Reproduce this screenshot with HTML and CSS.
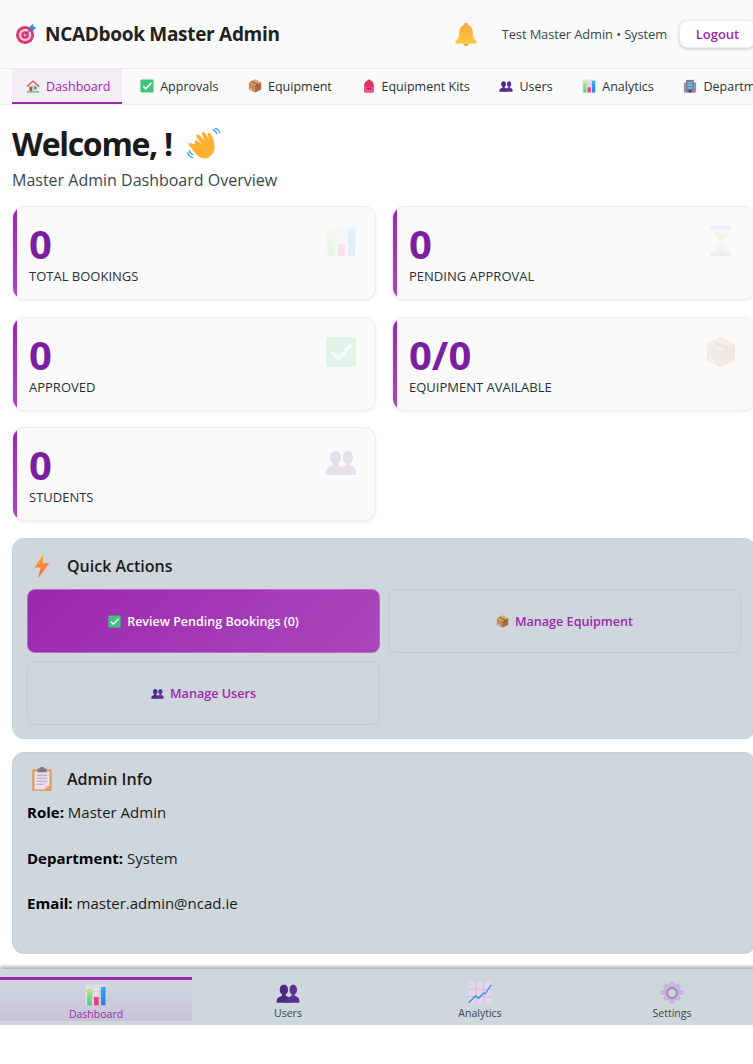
FILE: index.html
```html
<!DOCTYPE html>
<html lang="en">
<head>
  <meta charset="UTF-8" />
  <title>NCADbook Master Admin</title>
  <meta name="viewport" content="width=device-width, initial-scale=1" />
  <link rel="stylesheet" href="styles.css">
</head>
<body>
  <!-- icon set -->
  <svg class="icon-defs" aria-hidden="true">
    <defs>
      <linearGradient id="bell-grad" x1="0" y1="0" x2="0" y2="1">
        <stop offset="0" stop-color="#f9a64a" /><stop offset="1" stop-color="#ffc83d" />
      </linearGradient>
      <linearGradient id="bolt-grad" x1="0" y1="0" x2="0" y2="1">
        <stop offset="0" stop-color="#ffb02e" /><stop offset="1" stop-color="#f4614c" />
      </linearGradient>
      <linearGradient id="bar-green" x1="0" y1="0" x2="0" y2="1">
        <stop offset="0" stop-color="#b4f06a" /><stop offset="1" stop-color="#3fcf8a" />
      </linearGradient>
      <linearGradient id="bar-blue" x1="0" y1="0" x2="0" y2="1">
        <stop offset="0" stop-color="#34a8f0" /><stop offset="1" stop-color="#2a7fd8" />
      </linearGradient>
    </defs>
    <symbol id="i-target" viewBox="0 0 32 32">
      <circle cx="14.500" cy="17.500" r="14.500" fill="#e0336f" />
      <circle cx="14.500" cy="17.500" r="10" fill="#f3c6dc" />
      <circle cx="14.500" cy="17.500" r="6" fill="#e0336f" />
      <circle cx="14.500" cy="17.500" r="2.200" fill="#f3c6dc" />
      <path d="M14.500 17.500 26 6" stroke="#6b5a8c" stroke-width="2" />
      <path d="M22 4l1 5 5 1 4-4-4-2-1-4z" fill="#2f8fe0" />
    </symbol>
    <symbol id="i-bell" viewBox="0 0 32 32">
      <path d="M16 1c2 0 3 1 3 3 4 1.500 6 5 6 10 0 5 1 8 5 12 1 1.500 0 2.500-1 2.500H3c-1 0-2-1-1-2.500 4-4 5-7 5-12 0-5 2-8.500 6-10 0-2 1-3 3-3z" fill="url(#bell-grad)" />
      <path d="M12.500 29h7c0 2-1.500 3-3.500 3s-3.500-1-3.500-3z" fill="#f0a030" />
    </symbol>
    <symbol id="i-house" viewBox="0 0 32 32">
      <path d="M2 28h28v3H2z" fill="#3fbf6f" />
      <path d="M6 14h20v14H6z" fill="#e8d0b8" />
      <path d="M16 3 1 16l2 2L16 7l13 11 2-2z" fill="#c0604a" />
      <path d="M8 18h6v10H8z" fill="#a05a3c" />
      <path d="M18 17h6v6h-6z" fill="#3aa0e8" />
    </symbol>
    <symbol id="i-check" viewBox="0 0 32 32">
      <rect x="1" y="1" width="30" height="30" rx="3" fill="#3cc47c" />
      <path d="M8 17l5.500 5.500L25 10" fill="none" stroke="#fff" stroke-width="3.500" stroke-linecap="round" stroke-linejoin="round" />
    </symbol>
    <symbol id="i-box" viewBox="0 0 32 32">
      <path d="M16 1 30 8v16l-14 7L2 24V8z" fill="#c9895a" />
      <path d="M16 15v16l14-7V8z" fill="#a86c42" />
      <path d="M2 8l14 7 14-7-14-7z" fill="#dba878" />
      <path d="M9 4.500 23 11.500l0 5 -3 1.500 0-5L6 6z" fill="#8a5a36" />
      <path d="M5 21l4 2v3l-4-2z" fill="#eed8c0" />
    </symbol>
    <symbol id="i-kit" viewBox="0 0 32 32">
      <path d="M16 1c2 0 3 1 3.500 2.500C24 5 27 9 27 14v14c0 2-1 3-3 3H8c-2 0-3-1-3-3V14c0-5 3-9 7.500-10.500C13 2 14 1 16 1z" fill="#e0306e" />
      <path d="M5 17c4 2 18 2 22 0v11c0 2-1 3-3 3H8c-2 0-3-1-3-3z" fill="#f4508a" />
      <path d="M11 20h10v4H11z" fill="#b8204f" />
    </symbol>
    <symbol id="i-users" viewBox="0 0 32 32">
      <path d="M1 29v-3c0-3 2-4.500 5-5.500l2-1v-2c-2-1-3-3-3-6 0-4 2-6.500 5.500-6.500S16 7.500 16 11.500c0 3-1 5-3 6v2l2 1c2 .7 3 1.500 3 5.500v3z" fill="#4b2a82" />
      <path d="M14 29v-3c0-3 2-4.500 5-5.500l2-1v-2c-2-1-3-3-3-6 0-4 2-6.500 5-6.500s5 2.500 5 6.500c0 3-1 5-3 6v2l2 1c3 1 4 2.500 4 5.500v3z" fill="#5a3296" />
    </symbol>
    <symbol id="i-chart" viewBox="0 0 32 32">
      <rect x="1" y="1" width="30" height="30" rx="2" fill="#e6dfe9" />
      <path d="M11 1v30M21 1v30M1 11h30M1 21h30" stroke="#cfc6d6" stroke-width="1" />
      <rect x="3" y="7" width="7" height="24" fill="url(#bar-green)" />
      <rect x="13" y="19" width="7" height="12" fill="#ec3a80" />
      <rect x="23" y="4" width="7" height="27" fill="url(#bar-blue)" />
    </symbol>
    <symbol id="i-building" viewBox="0 0 32 32">
      <path d="M2 8h6v23H2zM24 8h6v23h-6z" fill="#9a94a8" />
      <path d="M7 2h18v29H7z" fill="#7f7a90" />
      <path d="M10 6h12v4H10zM10 12h12v4H10zM10 18h12v4H10z" fill="#5cc0ee" />
      <path d="M13 25h6v6h-6z" fill="#4a4558" />
    </symbol>
    <symbol id="i-hand" viewBox="0 0 32 32">
      <path d="M8 15c-1.500-1.500-1-3.500 1-3.500l5 4-5-7c-1-2 1-3.500 2.500-2l5.500 6-3-6.500c-.8-2 1.500-3 2.800-1.500l4.200 7-1.500-5c-.5-2 2-2.800 3-1 2 4 3.500 8.500 3.500 12 0 8-6 12-11 11-3.500-.7-6-3-8-6l-5-6c-1.300-1.800.8-3.500 2.500-2z" fill="#ffb02e" />
      <path d="M24 1.500c2 .5 3.500 2 4 4M26 0c2.500.7 4.500 2.500 5 5M2 21c.5 2 2 3.500 4 4M.5 23c.7 2.500 2.500 4.500 5 5" fill="none" stroke="#3f9ee8" stroke-width="1.300" />
    </symbol>
    <symbol id="i-hourglass" viewBox="0 0 32 32">
      <path d="M6 1h20v3H6zM6 28h20v3H6z" fill="#7d8a96" />
      <path d="M8 4h16c0 6-3 9-6 12 3 3 6 6 6 12H8c0-6 3-9 6-12-3-3-6-6-6-12z" fill="#bfe3f5" />
      <path d="M10 8h12c-1 3-4 6-6 7.500C14 14 11 11 10 8zM10 28c1-4 4-6 6-7 2 1 5 3 6 7z" fill="#f2a33c" />
    </symbol>
    <symbol id="i-bolt" viewBox="0 0 32 32">
      <path d="M18 0 6 18h8l-3 14 15-20h-9z" fill="url(#bolt-grad)" />
    </symbol>
    <symbol id="i-clipboard" viewBox="0 0 32 32">
      <rect x="3" y="3" width="26" height="29" rx="1" fill="#e09a62" />
      <path d="M6 6h20v19l-6 5H6z" fill="#e8e0ee" />
      <path d="M20 30v-5h6z" fill="#f0c090" />
      <path d="M10 3c0-1 1-1 2-1h1c0-1.500 1-2 3-2s3 .5 3 2h1c1 0 2 0 2 1v4H10z" fill="#7d7485" />
      <path d="M9 11h14M9 15h14M9 19h14M9 23h9" stroke="#b0a6bc" stroke-width="1.300" />
    </symbol>
    <symbol id="i-trend" viewBox="0 0 32 32">
      <rect x="1" y="1" width="30" height="30" rx="2" fill="#e4d6ec" />
      <path d="M11 1v30M21 1v30M1 11h30M1 21h30" stroke="#c8b8d4" stroke-width="1" />
      <path d="M1 29l9-9 4 3 7-7 2 1 8-12" fill="none" stroke="#2f8fe0" stroke-width="1.800" />
    </symbol>
    <symbol id="i-gear" viewBox="0 0 32 32">
      <path d="M13 1h6l1 4 4-2 4 4-2 4 5 1v6l-5 1 2 4-4 4-4-2-1 5h-6l-1-5-4 2-4-4 2-4-5-1v-6l5-1-2-4 4-4 4 2z" fill="#c8b4dc" />
      <circle cx="16" cy="16" r="8" fill="#a48cbc" />
      <circle cx="16" cy="16" r="5" fill="#cfd7dd" />
    </symbol>
  </svg>

  <div class="app">
    <header class="topbar">
      <div class="brand">
        <svg class="brand-icon"><use href="#i-target" /></svg>
        <span class="brand-name">NCADbook Master Admin</span>
      </div>
      <div class="topbar-right">
        <svg class="bell"><use href="#i-bell" /></svg>
        <span class="user-name">Test Master Admin • System</span>
        <button class="logout">Logout</button>
      </div>
    </header>

    <nav class="tabs">
      <a class="tab active"><svg><use href="#i-house" /></svg>Dashboard</a>
      <a class="tab"><svg><use href="#i-check" /></svg>Approvals</a>
      <a class="tab"><svg><use href="#i-box" /></svg>Equipment</a>
      <a class="tab"><svg><use href="#i-kit" /></svg>Equipment Kits</a>
      <a class="tab"><svg><use href="#i-users" /></svg>Users</a>
      <a class="tab"><svg><use href="#i-chart" /></svg>Analytics</a>
      <a class="tab"><svg><use href="#i-building" /></svg>Departments</a>
    </nav>

    <main class="content">
      <h1 class="welcome">Welcome, ! <svg class="wave"><use href="#i-hand" /></svg></h1>
      <p class="subtitle">Master Admin Dashboard Overview</p>

      <section class="stats">
        <div class="stat-card">
          <div class="stat-value">0</div>
          <div class="stat-label">Total Bookings</div>
          <svg class="stat-icon"><use href="#i-chart" /></svg>
        </div>
        <div class="stat-card">
          <div class="stat-value">0</div>
          <div class="stat-label">Pending Approval</div>
          <svg class="stat-icon"><use href="#i-hourglass" /></svg>
        </div>
        <div class="stat-card">
          <div class="stat-value">0</div>
          <div class="stat-label">Approved</div>
          <svg class="stat-icon"><use href="#i-check" /></svg>
        </div>
        <div class="stat-card">
          <div class="stat-value">0/0</div>
          <div class="stat-label">Equipment Available</div>
          <svg class="stat-icon"><use href="#i-box" /></svg>
        </div>
        <div class="stat-card">
          <div class="stat-value">0</div>
          <div class="stat-label">Students</div>
          <svg class="stat-icon"><use href="#i-users" /></svg>
        </div>
      </section>

      <section class="panel">
        <h2 class="panel-title"><svg><use href="#i-bolt" /></svg>Quick Actions</h2>
        <div class="actions">
          <button class="action primary"><svg><use href="#i-check" /></svg>Review Pending Bookings (0)</button>
          <button class="action"><svg><use href="#i-box" /></svg>Manage Equipment</button>
          <button class="action"><svg><use href="#i-users" /></svg>Manage Users</button>
        </div>
      </section>

      <section class="panel info">
        <h2 class="panel-title"><svg><use href="#i-clipboard" /></svg>Admin Info</h2>
        <p><strong>Role:</strong> Master Admin</p>
        <p><strong>Department:</strong> System</p>
        <p><strong>Email:</strong> master.admin@ncad.ie</p>
      </section>
    </main>

    <nav class="bottom-nav">
      <a class="bottom-item active"><svg><use href="#i-chart" /></svg>Dashboard</a>
      <a class="bottom-item"><svg><use href="#i-users" /></svg>Users</a>
      <a class="bottom-item"><svg><use href="#i-trend" /></svg>Analytics</a>
      <a class="bottom-item"><svg><use href="#i-gear" /></svg>Settings</a>
    </nav>
  </div>
</body>
</html>
```

FILE: styles.css
```css
* {
  box-sizing: border-box;
}

html, body {
  overflow-x: hidden;
}

body {
  margin: 0;
  background: white;
  color: #212121;
  font-family: "Open Sans", "Noto Sans", sans-serif;
}

.icon-defs {
  position: absolute;
  width: 0;
  height: 0;
}

/* the page is laid out wider than the window, the right edge gets cut off */
.app {
  width: 768px;
}

/* top bar */
.topbar {
  height: 69px;
  padding: 0 12px 0 16px;
  display: flex;
  align-items: center;
  justify-content: space-between;
  background: #fafafa;
  border-bottom: 1px solid #f3e5f5;
}
.brand {
  display: flex;
  align-items: center;
  gap: 9px;
}
.brand-icon {
  width: 20px;
  height: 20px;
}
.brand-name {
  font-size: 19px;
  font-weight: 700;
  letter-spacing: -0.3px;
}
.topbar-right {
  display: flex;
  align-items: center;
}
.bell {
  width: 24px;
  height: 24px;
  margin-right: 24px;
}
.user-name {
  font-size: 12.9px;
  font-weight: 500;
  color: #37474f;
  margin-right: 12px;
  letter-spacing: -0.1px;
}
.logout {
  width: 77px;
  height: 28px;
  padding: 0;
  border: 1px solid #f3e5f5;
  border-radius: 8px;
  background: white;
  color: #9c27b0;
  font-family: inherit;
  font-size: 13px;
  font-weight: 600;
  box-shadow: 0 1px 3px rgba(0,0,0,0.2);
}

/* tab row */
.tabs {
  height: 36px;
  padding: 0 12px;
  display: flex;
  gap: 4px;
  background: #fafafa;
  border-bottom: 1px solid #f3e5f5;
  overflow: hidden;
}
.tab {
  display: flex;
  align-items: center;
  flex-shrink: 0;
  padding: 1px 11.7px 0 12px;
  font-size: 12.5px;
  font-weight: 500;
  color: #263238;
  white-space: nowrap;
  border-bottom: 2px solid transparent;
}
.tab svg {
  width: 14px;
  height: 14px;
  margin: 0 6px 0 2px;
}
.tab.active {
  background: #f4edf6;
  color: #9c27b0;
  border-bottom-color: #9c27b0;
}

/* main */
.content {
  padding: 20px 12px 15px;
}
.welcome {
  margin: 0;
  font-size: 32px;
  font-weight: 700;
  line-height: 38px;
  color: #1a1a1a;
  letter-spacing: -1.3px;
}
.wave {
  width: 34px;
  height: 34px;
  vertical-align: -6px;
  margin-left: 8px;
}
.subtitle {
  margin: 7px 0 15px;
  font-size: 16px;
  line-height: 21px;
  color: #37474f;
}

.stats {
  display: grid;
  grid-template-columns: 1fr 1fr;
  gap: 16.5px 16px;
  margin-bottom: 17px;
}
.stat-card {
  position: relative;
  height: 94px;
  padding: 14px 16px 0 16px;
  background: #fafafa;
  border: 1px solid #f3e9f6;
  border-radius: 12px;
  box-shadow: 0 1px 3px rgba(0,0,0,0.08);
  overflow: hidden;
}
/* purple strip on the left side */
.stat-card::before {
  content: "";
  position: absolute;
  left: 0;
  top: 0;
  bottom: 0;
  width: 4px;
  background: linear-gradient(180deg, #9c27b0, #ab47bc);
}
.stat-value {
  font-size: 40px;
  font-weight: 700;
  line-height: 46px;
  color: #7b1fa2;
}
.stat-label {
  font-size: 13px;
  font-weight: 500;
  line-height: 18px;
  color: #263238;
  text-transform: uppercase;
}
.stat-icon {
  position: absolute;
  top: 18px;
  right: 18px;
  width: 32px;
  height: 32px;
  opacity: 0.12;
}

/* panels */
.panel {
  background: #cfd7dd;
  border: 1px solid #c9d0d8;
  border-radius: 12px;
  padding: 14px 14px 13px;
  margin-bottom: 13px;
}
.panel-title {
  display: flex;
  align-items: center;
  gap: 13px;
  margin: 1px 0 11px;
  height: 24px;
  font-size: 16px;
  font-weight: 550;
  color: #1a1a1a;
}
.panel-title svg {
  width: 24px;
  height: 24px;
  margin-left: 3px;
}
.actions {
  display: grid;
  grid-template-columns: 1fr 1fr;
  gap: 8px;
}
.action {
  display: flex;
  align-items: center;
  justify-content: center;
  gap: 6px;
  height: 64px;
  border: 1px solid #c2c9d4;
  border-radius: 8px;
  background: transparent;
  color: #9c27b0;
  font-family: inherit;
  font-size: 12.6px;
  font-weight: 550;
}
.action svg {
  width: 13px;
  height: 13px;
}
.action.primary {
  background: linear-gradient(135deg, #9c27b0, #ab47bc);
  color: white;
  border-color: #b46cc4;
  font-size: 12.5px;
  font-weight: 600;
}
.info {
  height: 202px;
  margin-bottom: 0;
}
.info .panel-title {
  margin: 0 0 9px;
}
.info p {
  margin: 0 0 21.5px;
  font-size: 15px;
  line-height: 24px;
  color: #1a1a1a;
}
.info strong {
  color: black;
}

/* bottom nav */
.bottom-nav {
  height: 56px;
  padding: 8px 0 4px;
  display: flex;
  background: #cfd7dd;
  box-shadow: 0 -2px 4px rgba(0,0,0,0.35), 0 3px 8px rgba(0,0,0,0.15);
}
.bottom-item {
  flex: 1;
  display: flex;
  flex-direction: column;
  align-items: center;
  padding-top: 4px;
  font-size: 10.5px;
  font-weight: 500;
  line-height: 14px;
  color: #37474f;
}
.bottom-item svg {
  width: 24px;
  height: 24px;
  margin-bottom: 1px;
}
.bottom-item.active {
  padding-top: 4px;
  border-top: 3px solid #9c27b0;
  background: linear-gradient(180deg, rgba(156,39,176,0), rgba(156,39,176,0.12));
  color: #9c27b0;
}
```
